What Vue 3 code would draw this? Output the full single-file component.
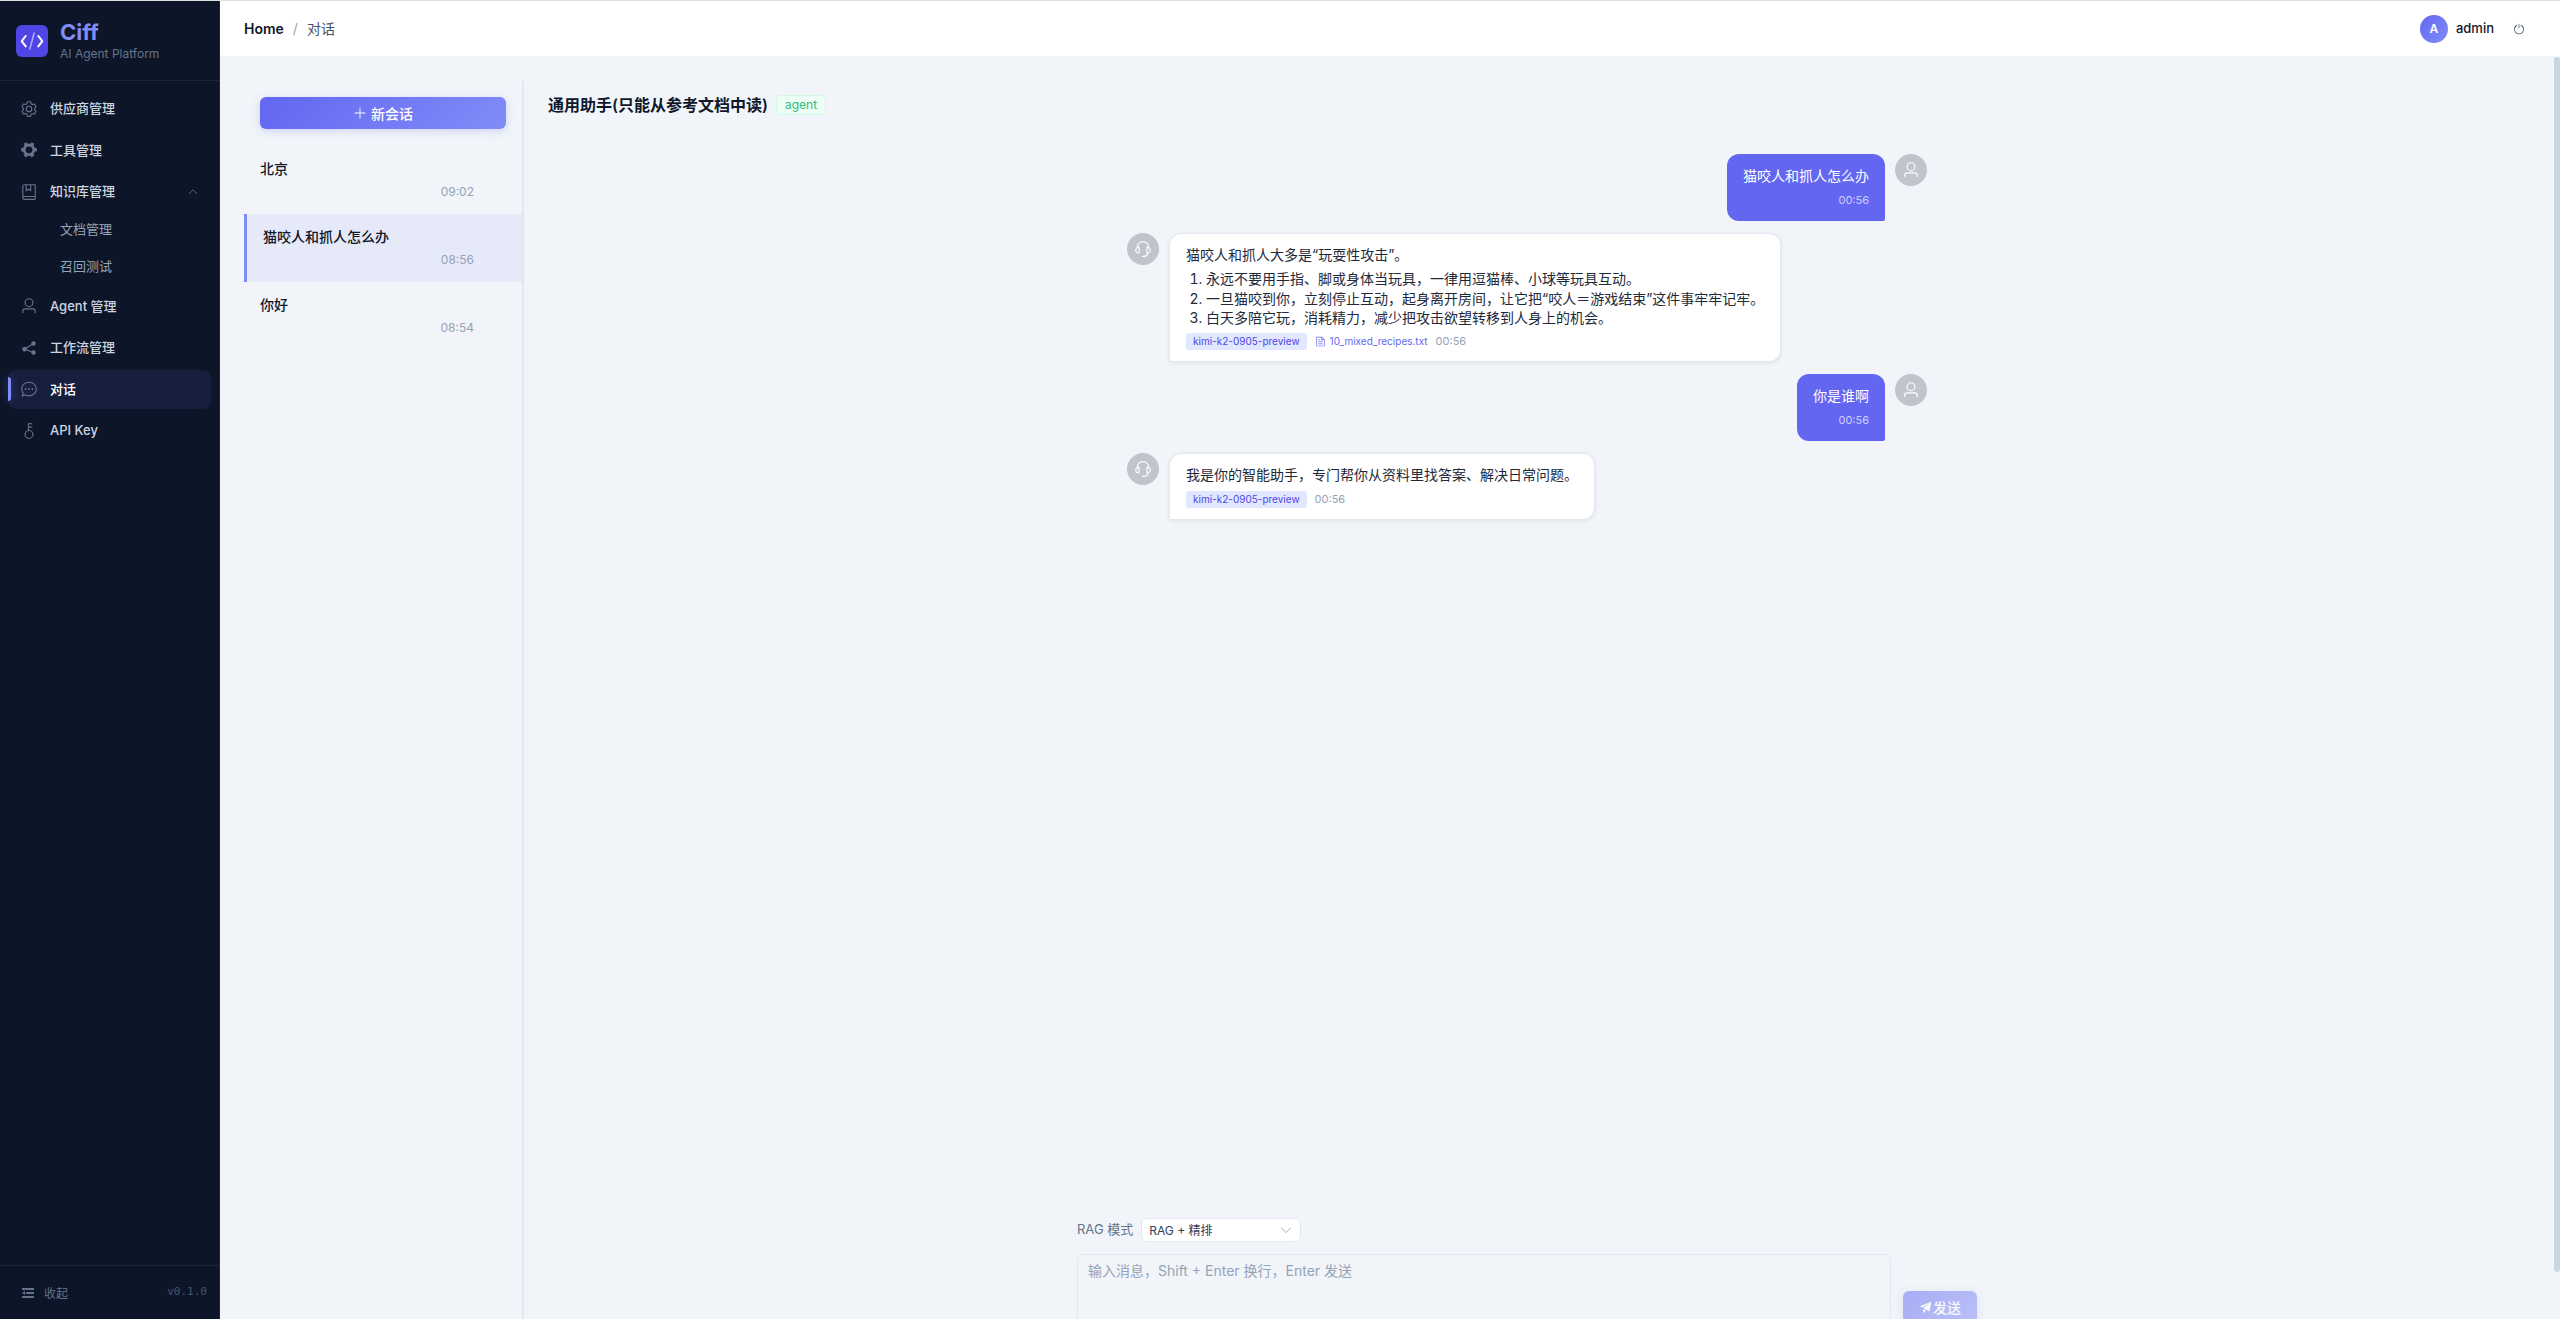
<template>
  <div class="layout">
    <aside class="sidebar">
      <div class="brand">
        <svg class="brand-logo" viewBox="0 0 32 32" fill="none" aria-hidden="true">
          <rect width="32" height="32" rx="6" fill="#4f46e5" />
          <path d="M9.700 11 5.700 16.200l4 5.200M22.300 11l4 5.200-4 5.200" stroke="#fff" stroke-width="2" stroke-linecap="round" stroke-linejoin="round" />
          <path d="M18.200 8 13.800 24" stroke="#a5b4fc" stroke-width="1.500" stroke-linecap="round" />
        </svg>
        <div class="brand-text">
          <span class="brand-name">Ciff</span>
          <span class="brand-sub">AI Agent Platform</span>
        </div>
      </div>

      <nav class="menu">
        <template v-for="item in menu" :key="item.label">
          <a href="#" class="menu-item" :class="{ active: item.active }">
            <svg class="menu-icon" viewBox="0 0 1024 1024" aria-hidden="true">
              <path :d="icons[item.icon]" />
            </svg>
            <span>{{ item.label }}</span>
            <svg v-if="item.children" class="menu-arrow" viewBox="0 0 1024 1024" aria-hidden="true">
              <path :d="icons.arrow" />
            </svg>
          </a>
          <div v-if="item.children" class="submenu">
            <a v-for="child in item.children" :key="child" href="#" class="submenu-item">{{ child }}</a>
          </div>
        </template>
      </nav>

      <div class="sidebar-footer">
        <button type="button" class="collapse-btn">
          <svg viewBox="0 0 1024 1024" aria-hidden="true"><path :d="icons.fold" /></svg>
          <span>收起</span>
        </button>
        <span class="version">v0.1.0</span>
      </div>
    </aside>

    <div class="page">
      <header class="topbar">
        <nav class="breadcrumb">
          <a href="#">Home</a>
          <span class="slash">/</span>
          <span class="current">对话</span>
        </nav>
        <div class="account">
          <span class="account-avatar">A</span>
          <span class="account-name">admin</span>
          <button type="button" class="logout" aria-label="退出登录">
            <svg viewBox="0 0 1024 1024" aria-hidden="true"><path :d="icons.power" /></svg>
          </button>
        </div>
      </header>

      <div class="viewport">
        <main class="content">
          <section class="sessions">
            <div class="sessions-top">
              <button type="button" class="new-btn">
                <svg viewBox="0 0 1024 1024" aria-hidden="true"><path :d="icons.plus" /></svg>
                <span>新会话</span>
              </button>
            </div>
            <div
              v-for="session in sessions"
              :key="session.title"
              class="session"
              :class="{ active: session.active }"
            >
              <div class="session-title">{{ session.title }}</div>
              <div class="session-time">{{ session.time }}</div>
            </div>
          </section>

          <section class="chat">
            <div class="chat-header">
              <h1>通用助手(只能从参考文档中读)</h1>
              <span class="tag">agent</span>
            </div>

            <div class="messages">
              <div v-for="(msg, i) in messages" :key="i" class="message" :class="msg.role">
                <span class="avatar">
                  <svg viewBox="0 0 1024 1024" aria-hidden="true">
                    <path :d="msg.role === 'user' ? icons.user : icons.service" />
                  </svg>
                </span>
                <div class="bubble">
                  <p>{{ msg.text }}</p>
                  <ol v-if="msg.list">
                    <li v-for="line in msg.list" :key="line">{{ line }}</li>
                  </ol>
                  <div class="meta">
                    <span v-if="msg.model" class="model">{{ msg.model }}</span>
                    <a v-if="msg.file" href="#" class="file">
                      <svg viewBox="0 0 1024 1024" aria-hidden="true"><path :d="icons.document" /></svg>
                      {{ msg.file }}
                    </a>
                    <span class="time">{{ msg.time }}</span>
                  </div>
                </div>
              </div>
            </div>

            <form class="composer" @submit.prevent>
              <div class="composer-options">
                <label for="rag-mode">RAG 模式</label>
                <div class="select">
                  <select id="rag-mode" v-model="ragMode">
                    <option value="rerank">RAG + 精排</option>
                  </select>
                  <svg viewBox="0 0 1024 1024" aria-hidden="true"><path :d="icons.arrow" /></svg>
                </div>
              </div>
              <div class="composer-row">
                <textarea
                  v-model="draft"
                  aria-label="输入消息"
                  placeholder="输入消息，Shift + Enter 换行，Enter 发送"
                ></textarea>
                <button type="submit" class="send-btn" :disabled="!draft">
                  <svg viewBox="0 0 1024 1024" aria-hidden="true"><path :d="icons.promotion" /></svg>
                  <span>发送</span>
                </button>
              </div>
            </form>
          </section>
        </main>
        <div class="scroll-track"><div class="scroll-thumb"></div></div>
      </div>
    </div>
  </div>
</template>

<script setup>
import { ref } from 'vue'

const ragMode = ref('rerank')
const draft = ref('')

const menu = [
  { label: '供应商管理', icon: 'setting' },
  { label: '工具管理', icon: 'tools' },
  { label: '知识库管理', icon: 'collection', children: ['文档管理', '召回测试'] },
  { label: 'Agent 管理', icon: 'user' },
  { label: '工作流管理', icon: 'share' },
  { label: '对话', icon: 'chat', active: true },
  { label: 'API Key', icon: 'key' }
]

const sessions = [
  { title: '北京', time: '09:02' },
  { title: '猫咬人和抓人怎么办', time: '08:56', active: true },
  { title: '你好', time: '08:54' }
]

const messages = [
  { role: 'user', text: '猫咬人和抓人怎么办', time: '00:56' },
  {
    role: 'assistant',
    text: '猫咬人和抓人大多是“玩耍性攻击”。',
    list: [
      '永远不要用手指、脚或身体当玩具，一律用逗猫棒、小球等玩具互动。',
      '一旦猫咬到你，立刻停止互动，起身离开房间，让它把“咬人＝游戏结束”这件事牢牢记牢。',
      '白天多陪它玩，消耗精力，减少把攻击欲望转移到人身上的机会。'
    ],
    model: 'kimi-k2-0905-preview',
    file: '10_mixed_recipes.txt',
    time: '00:56'
  },
  { role: 'user', text: '你是谁啊', time: '00:56' },
  {
    role: 'assistant',
    text: '我是你的智能助手，专门帮你从资料里找答案、解决日常问题。',
    model: 'kimi-k2-0905-preview',
    time: '00:56'
  }
]

const icons = {
  setting:
    'M600.704 64a32 32 0 0 1 30.464 22.208l35.2 109.376c14.784 7.232 28.928 15.36 42.432 24.512l112.384-24.192a32 32 0 0 1 34.432 15.36L944.32 364.8a32 32 0 0 1-4.032 37.504l-77.12 85.12a357.12 357.12 0 0 1 0 49.024l77.12 85.248a32 32 0 0 1 4.032 37.504l-88.704 153.6a32 32 0 0 1-34.432 15.296L708.8 803.904c-13.44 9.088-27.648 17.28-42.368 24.512l-35.264 109.376A32 32 0 0 1 600.704 960H423.296a32 32 0 0 1-30.464-22.208L357.696 828.48a351.616 351.616 0 0 1-42.56-24.64l-112.32 24.256a32 32 0 0 1-34.432-15.36L79.68 659.2a32 32 0 0 1 4.032-37.504l77.12-85.248a357.12 357.12 0 0 1 0-48.896l-77.12-85.248A32 32 0 0 1 79.68 364.8l88.704-153.6a32 32 0 0 1 34.432-15.296l112.32 24.256c13.568-9.152 27.776-17.408 42.56-24.64l35.2-109.312A32 32 0 0 1 423.232 64H600.64zm-23.424 64H446.72l-36.352 113.088-24.512 11.968a294.113 294.113 0 0 0-34.816 20.096l-22.656 15.36-116.224-25.088-65.28 113.152 79.68 88.192-1.92 27.136a293.12 293.12 0 0 0 0 40.192l1.92 27.136-79.808 88.192 65.344 113.152 116.224-25.024 22.656 15.296a294.113 294.113 0 0 0 34.816 20.096l24.512 11.968L446.72 896h130.688l36.48-113.152 24.448-11.904a288.282 288.282 0 0 0 34.752-20.096l22.592-15.296 116.288 25.024 65.28-113.152-79.744-88.192 1.92-27.136a293.12 293.12 0 0 0 0-40.256l-1.92-27.136 79.808-88.128-65.344-113.152-116.288 24.96-22.592-15.232a287.616 287.616 0 0 0-34.752-20.096l-24.448-11.904L577.344 128zM512 320a192 192 0 1 1 0 384 192 192 0 0 1 0-384m0 64a128 128 0 1 0 0 256 128 128 0 0 0 0-256',
  tools:
    'M764.416 254.72a351.68 351.68 0 0 1 86.336 149.184H960v192.064H850.752a351.68 351.68 0 0 1-86.336 149.312l54.72 94.72-166.272 96-54.592-94.72a352.64 352.64 0 0 1-172.48 0L371.136 936l-166.272-96 54.72-94.72a351.68 351.68 0 0 1-86.336-149.312H64v-192h109.248a351.68 351.68 0 0 1 86.336-149.312L204.8 160l166.208-96h.192l54.656 94.592a352.64 352.64 0 0 1 172.48 0L652.8 64h.128L819.2 160zM704 499.968a192 192 0 1 0-384 0 192 192 0 0 0 384 0',
  collection:
    'M192 736h640V128H256a64 64 0 0 0-64 64zm64-672h608a32 32 0 0 1 32 32v672a32 32 0 0 1-32 32H160l-32 57.536V192A128 128 0 0 1 256 64M240 800a48 48 0 1 0 0 96h592v-96zm0-64h656v160a64 64 0 0 1-64 64H240a112 112 0 0 1 0-224m144-608v250.88l96-76.8 96 76.8V128zm-64-64h320v381.44a32 32 0 0 1-51.968 24.96L480 384l-108.032 86.4A32 32 0 0 1 320 445.44z',
  user:
    'M512 512a192 192 0 1 0 0-384 192 192 0 0 0 0 384m0 64a256 256 0 1 1 0-512 256 256 0 0 1 0 512m320 320v-96a96 96 0 0 0-96-96H288a96 96 0 0 0-96 96v96a32 32 0 1 1-64 0v-96a160 160 0 0 1 160-160h448a160 160 0 0 1 160 160v96a32 32 0 1 1-64 0',
  share:
    'm679.872 348.8-301.76 188.608a127.808 127.808 0 0 1 5.12 52.16l279.936 104.96a128 128 0 1 1-22.464 59.904l-279.872-104.96a128 128 0 1 1-16.64-166.272l301.696-188.608a128 128 0 1 1 33.92 54.272z',
  chat:
    'm174.72 855.68 135.296-45.12 23.68 11.84C388.096 849.536 448.576 864 512 864c211.84 0 384-166.784 384-352S723.84 160 512 160 128 326.784 128 512c0 69.12 24.96 139.264 70.848 199.232l22.08 28.8-46.272 115.584zm-45.248 82.56A32 32 0 0 1 89.6 896l58.368-145.92C94.72 680.32 64 596.864 64 512 64 299.904 256 96 512 96s448 203.904 448 416-192 416-448 416a461.056 461.056 0 0 1-206.912-48.384l-175.616 58.56zM512 563.2a51.2 51.2 0 1 1 0-102.4 51.2 51.2 0 0 1 0 102.4m192 0a51.2 51.2 0 1 1 0-102.4 51.2 51.2 0 0 1 0 102.4m-384 0a51.2 51.2 0 1 1 0-102.4 51.2 51.2 0 0 1 0 102.4',
  key:
    'M448 456.064V96a32 32 0 0 1 32-32.064L672 64a32 32 0 0 1 0 64H512v128h160a32 32 0 0 1 0 64H512v128a256 256 0 1 1-64 8.064M512 896a192 192 0 1 0 0-384 192 192 0 0 0 0 384',
  arrow:
    'M831.872 340.864 512 652.672 192.128 340.864a30.592 30.592 0 0 0-42.752 0 29.12 29.12 0 0 0 0 41.6L489.664 714.24a32 32 0 0 0 44.672 0l340.288-331.712a29.12 29.12 0 0 0 0-41.728 30.592 30.592 0 0 0-42.752 0z',
  fold: 'M896 192H128v128h768zm0 256H384v128h512zm0 256H128v128h768zM320 384 128 512l192 128z',
  plus: 'M480 480V128a32 32 0 0 1 64 0v352h352a32 32 0 1 1 0 64H544v352a32 32 0 1 1-64 0V544H128a32 32 0 0 1 0-64z',
  power:
    'M352 159.872V230.4a352 352 0 1 0 320 0v-70.528A416.128 416.128 0 0 1 512 960a416 416 0 0 1-160-800.128M512 64q32 0 32 32v320q0 32-32 32t-32-32V96q0-32 32-32',
  document:
    'M832 384H576V128H192v768h640zm-26.496-64L640 154.496V320zM160 64h480l256 256v608a32 32 0 0 1-32 32H160a32 32 0 0 1-32-32V96a32 32 0 0 1 32-32m160 448h384v64H320zm0-192h160v64H320zm0 384h384v64H320z',
  promotion: 'm64 448 832-320-128 704-446.08-243.328L832 192 242.816 545.536zm256 512V657.024L512 768z',
  service:
    'M864 409.6a192 192 0 0 1-37.888 349.44A256.064 256.064 0 0 1 576 960h-96a32 32 0 1 1 0-64h96a192.064 192.064 0 0 0 181.12-128H736a32 32 0 0 1-32-32V416a32 32 0 0 1 32-32h32c10.368 0 20.544.832 30.528 2.432a288 288 0 0 0-573.056 0A193.235 193.235 0 0 1 256 384h32a32 32 0 0 1 32 32v320a32 32 0 0 1-32 32h-32a192 192 0 0 1-96-358.4 352 352 0 0 1 704 0M256 448a128 128 0 1 0 0 256zm640 128a128 128 0 0 0-128-128v256a128 128 0 0 0 128-128'
}
</script>

<style>
body {
  margin: 0;
  font-family: Inter, "Noto Sans CJK SC", sans-serif;
  background: #f1f5f9;
}

button,
select,
textarea {
  font-family: inherit;
}
</style>

<style scoped>
* {
  box-sizing: border-box;
}

a {
  text-decoration: none;
}

button {
  border: 0;
  padding: 0;
  background: none;
}

svg {
  flex-shrink: 0;
  fill: currentColor;
}

.layout {
  display: flex;
  height: 100vh;
  overflow: hidden;
  border-top: 1px solid #dfdfdf;
  font-size: 14px;
  line-height: 1.5;
  color: #0f172a;
}

/* Sidebar */
.sidebar {
  display: flex;
  flex-direction: column;
  flex-shrink: 0;
  width: 220px;
  background: #0d1628;
  border-right: 1px solid #1c2444;
}

.brand {
  display: flex;
  align-items: center;
  gap: 12px;
  height: 80px;
  padding: 0 16px;
  border-bottom: 1px solid #1b253b;
}

.brand-logo {
  width: 32px;
  height: 32px;
  fill: none;
}

.brand-text {
  display: flex;
  flex-direction: column;
}

.brand-name {
  font-size: 22px;
  font-weight: 700;
  line-height: 26px;
  color: #818cf8;
}

.brand-sub {
  font-size: 12px;
  line-height: 18px;
  color: #64748b;
}

.menu {
  display: flex;
  flex-direction: column;
  flex: 1;
  gap: 2px;
  padding: 8px;
}

.menu-item {
  position: relative;
  display: flex;
  align-items: center;
  gap: 12px;
  padding: 10px 12px;
  border-radius: 8px;
  font-size: 13px;
  font-weight: 500;
  color: #cbd5e1;
}

.menu-item.active {
  color: #fff;
  background: #171f3f;
}

.menu-item.active::before {
  content: '';
  position: absolute;
  left: 0;
  top: 7px;
  width: 3px;
  height: 24px;
  border-radius: 0 3px 3px 0;
  background: #818cf8;
  box-shadow: 0 0 8px rgba(129, 140, 248, 0.4);
}

.menu-icon {
  width: 18px;
  height: 18px;
  color: #64748b;
}

.menu-arrow {
  width: 12px;
  height: 12px;
  margin-left: auto;
  color: #64748b;
  transform: rotate(180deg);
}

.submenu {
  display: flex;
  flex-direction: column;
  gap: 2px;
  margin-top: -2px;
}

.submenu-item {
  padding: 8px 12px 8px 52px;
  font-size: 13px;
  color: #94a3b8;
}

.sidebar-footer {
  display: flex;
  align-items: center;
  justify-content: space-between;
  height: 54px;
  padding: 0 12px 0 20px;
  border-top: 1px solid #1b253b;
}

.collapse-btn {
  display: flex;
  align-items: center;
  gap: 8px;
  font-size: 12px;
  color: #64748b;
}

.collapse-btn svg {
  width: 16px;
  height: 16px;
}

.version {
  font-family: "DejaVu Sans Mono", monospace;
  font-size: 11px;
  color: #475569;
}

/* Top bar */
.page {
  display: flex;
  flex-direction: column;
  flex: 1;
  min-width: 0;
}

.topbar {
  display: flex;
  align-items: center;
  justify-content: space-between;
  flex-shrink: 0;
  height: 56px;
  padding: 0 24px;
  background: #fff;
  border-bottom: 1px solid #f1f5f9;
}

.breadcrumb {
  display: flex;
  gap: 9px;
}

.breadcrumb a {
  font-weight: 600;
  color: #0f172a;
}

.slash {
  color: #94a3b8;
}

.current {
  color: #475569;
}

.account {
  display: flex;
  align-items: center;
  gap: 8px;
}

.account-avatar {
  display: grid;
  place-items: center;
  width: 28px;
  height: 28px;
  border-radius: 50%;
  font-size: 12px;
  font-weight: 600;
  color: #fff;
  background: linear-gradient(135deg, #6366f1, #818cf8);
}

.account-name {
  font-size: 13px;
  font-weight: 500;
}

.logout {
  display: flex;
  align-items: center;
  justify-content: center;
  width: 34px;
  height: 29px;
  color: #475569;
}

.logout svg {
  width: 12px;
  height: 12px;
}

/* Content */
.viewport {
  display: flex;
  flex: 1;
  min-height: 0;
  overflow: hidden;
}

.content {
  display: flex;
  flex: 1;
  min-width: 0;
  height: calc(100vh - 8px);
  padding: 24px;
}

.scroll-track {
  width: 6px;
}

.scroll-thumb {
  height: 96.3%;
  border-radius: 3px;
  background: #cbd5e1;
}

.sessions {
  flex-shrink: 0;
  width: 280px;
  height: 100%;
  border-right: 2px solid #e2e8f0;
}

.sessions-top {
  padding: 16px 16px 17px;
}

.new-btn {
  display: flex;
  align-items: center;
  justify-content: center;
  gap: 4px;
  width: 100%;
  height: 32px;
  border-radius: 6px;
  font-size: 14px;
  font-weight: 500;
  color: #fff;
  background: linear-gradient(135deg, #6366f1, #818cf8);
  box-shadow: 0 2px 8px rgba(99, 102, 241, 0.25);
}

.new-btn svg {
  width: 14px;
  height: 14px;
}

.session {
  display: flex;
  flex-direction: column;
  gap: 2px;
  padding: 12px 48px 12px 16px;
}

.session.active {
  border-left: 3px solid #818cf8;
  background: #e6e9f8;
}

.session-title {
  font-size: 14px;
  font-weight: 500;
  line-height: 22px;
}

.session-time {
  font-size: 12px;
  line-height: 20px;
  text-align: right;
  color: #94a3b8;
}

.chat {
  display: flex;
  flex-direction: column;
  flex: 1;
  min-width: 0;
}

.chat-header {
  display: flex;
  align-items: center;
  gap: 8px;
  padding: 12px 24px;
}

.chat-header h1 {
  margin: 0;
  font-size: 16px;
  font-weight: 600;
  line-height: 24px;
}

.tag {
  padding: 0 8px;
  border: 1px solid #d1fae5;
  border-radius: 4px;
  font-size: 12px;
  line-height: 18px;
  color: #34b981;
  background: #ecfdf5;
}

.messages {
  display: flex;
  flex-direction: column;
  flex: 1;
  gap: 12px;
  width: 100%;
  max-width: 800px;
  margin: 0 auto;
  padding-top: 25px;
}

.message {
  display: flex;
  align-items: flex-start;
  gap: 10px;
}

.message.user {
  flex-direction: row-reverse;
}

.avatar {
  display: grid;
  place-items: center;
  flex-shrink: 0;
  width: 32px;
  height: 32px;
  border-radius: 50%;
  color: #fff;
  background: #c0c4cc;
}

.avatar svg {
  width: 18px;
  height: 18px;
}

.bubble {
  padding: 10px 16px 11px;
  border: 1px solid #e2e8f0;
  border-radius: 12px 12px 12px 2px;
  color: #1e293b;
  background: #fff;
  box-shadow: 0 1px 4px rgba(15, 23, 42, 0.08);
}

.user .bubble {
  padding: 11px 16px 12px;
  border: 0;
  border-radius: 12px 12px 2px 12px;
  color: #fff;
  background: #6366f1;
  box-shadow: none;
}

.bubble p {
  margin: 0;
  line-height: 22px;
}

.bubble ol {
  margin: 3px 0 0;
  padding-left: 20px;
  line-height: 1.4;
}

.meta {
  display: flex;
  align-items: center;
  gap: 8px;
  margin-top: 5px;
  font-size: 11px;
  line-height: 17px;
}

.user .meta {
  justify-content: flex-end;
}

.model {
  padding: 0 7px;
  border-radius: 3px;
  font-size: 10px;
  color: #4f46e5;
  background: #e0e7ff;
}

.file {
  display: flex;
  align-items: center;
  gap: 4px;
  font-size: 10px;
  color: #6366f1;
}

.file svg {
  width: 11px;
  height: 11px;
}

.time {
  color: #94a3b8;
}

.user .time {
  color: rgba(255, 255, 255, 0.7);
}

/* Composer */
.composer {
  width: 100%;
  max-width: 900px;
  margin: 0 auto;
  padding-bottom: 21px;
}

.composer-options {
  display: flex;
  align-items: center;
  gap: 8px;
  height: 24px;
  margin-bottom: 12px;
}

.composer-options label {
  font-size: 13px;
  color: #64748b;
}

.select {
  position: relative;
  width: 160px;
  height: 24px;
}

.select select {
  display: block;
  width: 100%;
  height: 100%;
  padding: 0 28px 0 7px;
  appearance: none;
  border: 1px solid #e2e8f0;
  border-radius: 6px;
  font-size: 12px;
  color: #334155;
  background: #fff;
}

.select svg {
  position: absolute;
  top: 5px;
  right: 8px;
  width: 14px;
  height: 14px;
  color: #a8b3c4;
  pointer-events: none;
}

.composer-row {
  display: flex;
  align-items: flex-end;
  gap: 12px;
}

textarea {
  flex: 1;
  height: 69px;
  padding: 5px 10px;
  border: 1px solid #e2e8f0;
  border-radius: 6px;
  resize: none;
  font-size: 14px;
  line-height: 21px;
  color: #0f172a;
  background: transparent;
}

textarea::placeholder {
  color: #94a3b8;
}

.send-btn {
  display: flex;
  align-items: center;
  justify-content: center;
  width: 74px;
  height: 32px;
  border-radius: 6px;
  font-size: 14px;
  font-weight: 500;
  color: #fff;
  background: linear-gradient(135deg, #6366f1, #818cf8);
  box-shadow: 0 2px 8px rgba(99, 102, 241, 0.25);
}

.send-btn:disabled {
  opacity: 0.5;
}

.send-btn svg {
  width: 14px;
  height: 14px;
}
</style>
